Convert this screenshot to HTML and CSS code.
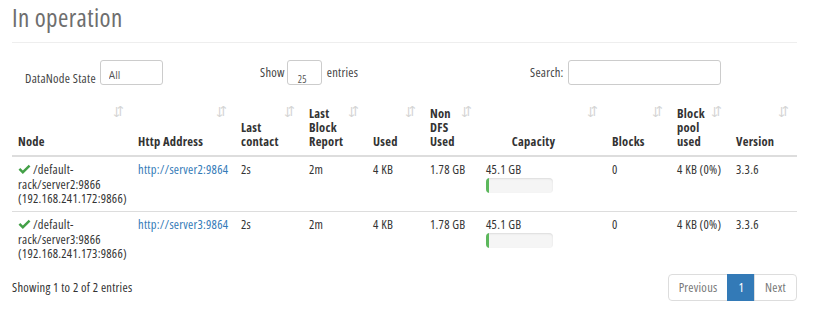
FILE: index.html
```html
<!DOCTYPE html>
<html lang="en">
<head>
    <meta charset="UTF-8">
    <title>Datanode Information</title>
    <link rel="stylesheet" href="styles.css">
</head>
<body>

<div class="page-header">
    <h1>In operation</h1>
</div>

<div class="controls">
    <div class="state-filter">
        <label>DataNode State</label>
        <select class="state-select">
            <option>All</option>
        </select>
    </div>
    <div class="length">
        <label>Show</label>
        <span class="length-select">25</span>
        <label>entries</label>
    </div>
    <div class="search">
        <label>Search:</label>
        <input type="search" class="search-input">
    </div>
</div>

<table class="datanodes">
    <colgroup>
        <col class="c-node">
        <col class="c-http">
        <col class="c-contact">
        <col class="c-report">
        <col class="c-used">
        <col class="c-nondfs">
        <col class="c-capacity">
        <col class="c-blocks">
        <col class="c-pool">
        <col class="c-version">
    </colgroup>
    <thead>
        <tr>
            <th class="sorting">Node</th>
            <th class="sorting">Http Address</th>
            <th class="sorting">Last contact</th>
            <th class="sorting">Last Block Report</th>
            <th class="sorting">Used</th>
            <th class="sorting">Non DFS Used</th>
            <th class="sorting center">Capacity</th>
            <th class="sorting">Blocks</th>
            <th class="sorting">Block pool used</th>
            <th class="sorting">Version</th>
        </tr>
    </thead>
    <tbody>
        <tr>
            <td><span class="ok"><svg width="13" height="11" viewBox="0 0 14 12"><path d="M0.5 6.2 L2.4 4.3 L5.2 7.1 L11.6 0.7 L13.5 2.6 L5.2 10.9 Z" fill="#43a047"/></svg></span>/default-rack/server2:9866 (192.168.241.172:9866)</td>
            <td><a href="#">http://server2:9864</a></td>
            <td>2s</td>
            <td>2m</td>
            <td>4 KB</td>
            <td>1.78 GB</td>
            <td>
                45.1 GB
                <div class="progress"><div class="progress-bar" style="width: 4%"></div></div>
            </td>
            <td>0</td>
            <td>4 KB (0%)</td>
            <td>3.3.6</td>
        </tr>
        <tr>
            <td><span class="ok"><svg width="13" height="11" viewBox="0 0 14 12"><path d="M0.5 6.2 L2.4 4.3 L5.2 7.1 L11.6 0.7 L13.5 2.6 L5.2 10.9 Z" fill="#43a047"/></svg></span>/default-rack/server3:9866 (192.168.241.173:9866)</td>
            <td><a href="#">http://server3:9864</a></td>
            <td>2s</td>
            <td>2m</td>
            <td>4 KB</td>
            <td>1.78 GB</td>
            <td>
                45.1 GB
                <div class="progress"><div class="progress-bar" style="width: 4%"></div></div>
            </td>
            <td>0</td>
            <td>4 KB (0%)</td>
            <td>3.3.6</td>
        </tr>
    </tbody>
</table>

<div class="table-footer">
    <div class="info">Showing 1 to 2 of 2 entries</div>
    <ul class="pagination">
        <li class="disabled"><a href="#">Previous</a></li>
        <li class="active"><a href="#">1</a></li>
        <li class="disabled"><a href="#">Next</a></li>
    </ul>
</div>

</body>
</html>
```

FILE: styles.css
```css
body {
    font-family: "Open Sans", Lato, sans-serif;
    font-stretch: 75%;
    font-size: 12.5px;
    letter-spacing: 0.25px;
    line-height: 14px;
    color: #333;
    background-color: #fff;
    margin: 0;
    padding: 0 33px 0 12px;
}

a {
    color: #337ab7;
    text-decoration: none;
}

.page-header {
    border-bottom: 1px solid #eee;
    padding: 2px 0 9px;
}

.page-header h1 {
    margin: 0;
    font-size: 25px;
    letter-spacing: 0.4px;
    line-height: 31px;
    font-weight: normal;
    color: #6e6e6e;
}

/* top controls */
.controls {
    display: flex;
    align-items: center;
    height: 25px;
    margin-top: 17px;
}

.controls label {
    color: #444;
}

.state-filter {
    box-sizing: border-box;
    width: 248px;
    display: flex;
    align-items: center;
    padding-left: 13px;
}

.state-filter label {
    margin-top: 13px;
    margin-right: 4px;
}

.state-select {
    width: 63px;
    height: 25px;
    border: 1px solid #ccc;
    border-radius: 3px;
    background: #fff;
    font-family: inherit;
    font-size: 10px;
    color: #555;
    padding: 4px 0 0 8px;
    appearance: none;
}

.length {
    width: 270px;
    display: flex;
    align-items: center;
}

.length-select {
    display: inline-block;
    box-sizing: border-box;
    width: 35px;
    height: 25px;
    border: 1px solid #ccc;
    border-radius: 3px;
    margin: 0 5px 0 2px;
    padding: 11px 0 0 10px;
    font-size: 10px;
    color: #555;
    overflow: hidden;
}

.search {
    display: flex;
    align-items: center;
}

.search-input {
    box-sizing: border-box;
    width: 153px;
    height: 25px;
    margin-left: 4px;
    border: 1px solid #ccc;
    border-radius: 3px;
}

/* table */
.datanodes {
    width: 785px;
    border-collapse: collapse;
    table-layout: fixed;
    margin-top: 15px;
}

.c-node { width: 120px; }
.c-http { width: 103px; }
.c-contact { width: 68px; }
.c-report { width: 64px; }
.c-used { width: 57px; }
.c-nondfs { width: 56px; }
.c-capacity { width: 126px; }
.c-blocks { width: 65px; }
.c-pool { width: 59px; }
.c-version { width: 67px; }

.datanodes th {
    position: relative;
    text-align: left;
    vertical-align: bottom;
    font-weight: bold;
    padding: 7px 20px 6px 6px;
    border-bottom: 2px solid #ddd;
}

.datanodes th.center {
    text-align: center;
    padding-right: 25px;
}

.datanodes th.sorting::after {
    content: "\21F5";
    position: absolute;
    top: 4px;
    right: 8px;
    font-size: 13px;
    color: #d4d4d4;
    font-weight: normal;
}

.datanodes td {
    vertical-align: top;
    padding: 6px 6px 5px;
    border-bottom: 1px solid #ddd;
}

.datanodes tbody tr:last-child td {
    border-bottom: none;
}

.ok {
    display: inline-block;
    vertical-align: -1px;
    margin-right: 2px;
}

.progress {
    width: 67px;
    height: 15px;
    margin-top: 1px;
    background-color: #f5f5f5;
    border-radius: 4px;
    box-shadow: inset 0 1px 2px rgba(0, 0, 0, 0.1);
    overflow: hidden;
}

.progress-bar {
    height: 100%;
    background-color: #5cb85c;
}

/* footer */
.table-footer {
    display: flex;
    justify-content: space-between;
    align-items: center;
    width: 785px;
    margin-top: 8px;
}

.pagination {
    display: flex;
    list-style: none;
    margin: 0;
    padding: 0;
}

.pagination li a {
    display: block;
    padding: 5px 10px;
    line-height: 15px;
    border: 1px solid #ddd;
    margin-left: -1px;
    color: #777;
    background: #fff;
}

.pagination li:first-child a {
    border-radius: 4px 0 0 4px;
}

.pagination li:last-child a {
    border-radius: 0 4px 4px 0;
}

.pagination li.active a {
    background-color: #337ab7;
    border-color: #337ab7;
    color: #fff;
}
```
